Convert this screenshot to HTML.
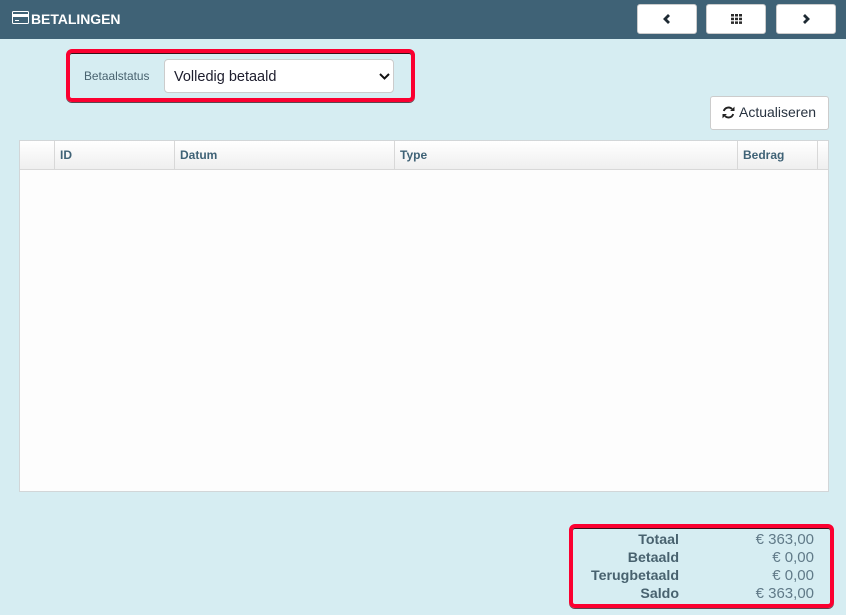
<!DOCTYPE html>
<html><head><meta charset="utf-8"><style>
*{box-sizing:border-box}
html,body{margin:0;padding:0}
body{width:846px;height:615px;overflow:hidden;background:#d6edf2;position:relative;font-family:"Liberation Sans",sans-serif}
.a{position:absolute}
.hdr{left:0;top:0;width:846px;height:39px;background:#3f6276}
.nav{top:4px;width:60px;height:30px;background:#fff;border:1px solid #ccc;border-radius:3px}
.red{border:4px solid #fb0030;border-radius:6px;box-shadow:inset 0 1px 0 #3a1018,0 1px 0 rgba(40,0,10,.7)}
.th{top:141px;height:28px;line-height:28px;font-size:12px;font-weight:bold;color:#3f6276}
.sep{top:141px;width:1px;height:28px;background:#d8d8d8}
.lb{left:570px;width:109px;text-align:right;font-size:14.2px;font-weight:bold;color:#48626f;height:18px;line-height:18px}
.vl{left:700px;width:114px;text-align:right;font-size:15px;color:#607a88;height:18px;line-height:18px}
</style></head><body>
<div class="a hdr"></div>
<svg class="a" style="left:12px;top:11px" width="17" height="13" viewBox="0 0 17 13"><rect x=".5" y=".5" width="16" height="12" rx="1" fill="none" stroke="#fff"/><rect x="1" y="3" width="15" height="3" fill="#fff"/><rect x="3" y="9" width="4" height="1" fill="#fff"/></svg>
<div class="a" style="left:31px;top:10px;height:18px;line-height:18px;font-size:14px;font-weight:bold;color:#fff;letter-spacing:-.05px">BETALINGEN</div>
<div class="a nav" style="left:637px"></div>
<div class="a nav" style="left:706px"></div>
<div class="a nav" style="left:776px"></div>
<svg class="a" style="left:662px;top:14px" width="9" height="10" viewBox="0 0 9 10"><path d="M7 1 3 5l4 4" fill="none" stroke="#1e2a33" stroke-width="2.8"/></svg>
<svg class="a" style="left:731px;top:14px" width="11" height="10" viewBox="0 0 11 10" fill="#2b2b2b"><rect x="0" y="0" width="3" height="2.5"/><rect x="4" y="0" width="3" height="2.5"/><rect x="8" y="0" width="3" height="2.5"/><rect x="0" y="3.7" width="3" height="2.5"/><rect x="4" y="3.7" width="3" height="2.5"/><rect x="8" y="3.7" width="3" height="2.5"/><rect x="0" y="7.4" width="3" height="2.5"/><rect x="4" y="7.4" width="3" height="2.5"/><rect x="8" y="7.4" width="3" height="2.5"/></svg>
<svg class="a" style="left:802px;top:14px" width="9" height="10" viewBox="0 0 9 10"><path d="M2 1l4 4-4 4" fill="none" stroke="#1e2a33" stroke-width="2.8"/></svg>

<div class="a red" style="left:66px;top:49px;width:349px;height:53px"></div>
<div class="a" style="left:84px;top:68px;height:16px;line-height:16px;font-size:11.9px;color:#48626f">Betaalstatus</div>
<div class="a" style="left:164px;top:59px;width:230px;height:34px;background:#fff;border:1px solid #ccc;border-radius:4px"></div>
<div class="a" style="left:174px;top:68px;height:18px;line-height:18px;font-size:14.5px;color:#1c1c2c">Volledig betaald</div>
<svg class="a" style="left:379px;top:73px" width="11" height="7" viewBox="0 0 11 7"><path d="M1 1l4.5 4.5L10 1" fill="none" stroke="#111" stroke-width="2"/></svg>

<div class="a" style="left:710px;top:96px;width:119px;height:34px;background:#fff;border:1px solid #ccc;border-radius:3px"></div>
<svg class="a" style="left:722px;top:106px" width="13" height="13" viewBox="0 0 13 13"><path d="M1.8 5A4.900 4.900 0 0 1 10 3M11.200 8A4.900 4.900 0 0 1 3 10" fill="none" stroke="#222" stroke-width="1.9"/><path d="M12.500 .6V5H8.100zM.5 12.400V8H4.900z" fill="#222"/></svg>
<div class="a" style="left:739px;top:104px;height:17px;line-height:17px;font-size:14px;color:#283340">Actualiseren</div>

<div class="a" style="left:19px;top:140px;width:810px;height:352px;background:#fdfdfd;border:1px solid #d2d6d8"></div>
<div class="a" style="left:20px;top:141px;width:808px;height:28px;background:linear-gradient(#fff,#efefef)"></div>
<div class="a" style="left:20px;top:169px;width:808px;height:1px;background:#d8d8d8"></div>
<div class="a sep" style="left:54px"></div>
<div class="a sep" style="left:174px"></div>
<div class="a sep" style="left:394px"></div>
<div class="a sep" style="left:737px"></div>
<div class="a sep" style="left:817px"></div>
<div class="a th" style="left:60px">ID</div>
<div class="a th" style="left:180px">Datum</div>
<div class="a th" style="left:400px">Type</div>
<div class="a th" style="left:743px">Bedrag</div>

<div class="a red" style="left:569px;top:524px;width:265px;height:84px"></div>
<div class="a lb" style="top:531px">Totaal</div><div class="a vl" style="top:531px">€ 363,00</div>
<div class="a lb" style="top:549px">Betaald</div><div class="a vl" style="top:549px">€ 0,00</div>
<div class="a lb" style="top:567px">Terugbetaald</div><div class="a vl" style="top:567px">€ 0,00</div>
<div class="a lb" style="top:585px">Saldo</div><div class="a vl" style="top:585px">€ 363,00</div>
</body></html>
